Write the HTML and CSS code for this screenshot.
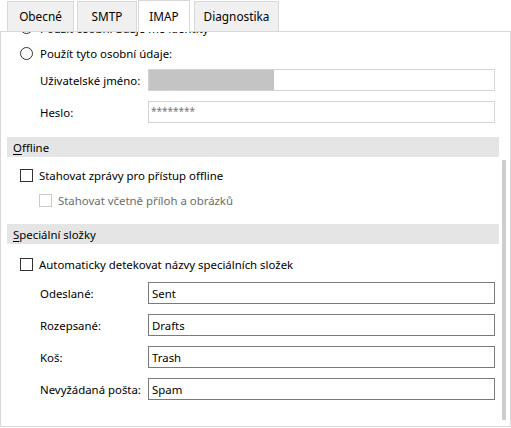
FILE: index.html
```html
<!DOCTYPE html>
<html lang="cs">
<head>
  <meta charset="UTF-8" />
  <title>Nastavení účtu - IMAP</title>
  <link rel="stylesheet" href="styles.css">
</head>
<body>
  <div class="tabs">
    <div class="tab tab-obecne">Obecné</div>
    <div class="tab tab-smtp">SMTP</div>
    <div class="tab tab-imap active">IMAP</div>
    <div class="tab tab-diag">Diagnostika</div>
  </div>

  <div class="panel">
    <div class="content">
      <label class="option first">
        <span class="radio"></span>
        <span class="option-text">Použít osobní údaje mé identity</span>
      </label>
      <label class="option">
        <span class="radio"></span>
        <span class="option-text">Použít tyto osobní údaje:</span>
      </label>

      <div class="fields">
        <div class="field">
          <span class="field-label">Uživatelské jméno:</span>
          <div class="input disabled"><span class="redacted"></span></div>
        </div>
        <div class="field">
          <span class="field-label">Heslo:</span>
          <div class="input disabled password">********</div>
        </div>
      </div>

      <div class="section"><u>O</u>ffline</div>
      <label class="check-row">
        <span class="checkbox"></span>
        <span>Stahovat zprávy pro přístup offline</span>
      </label>
      <label class="check-row sub disabled">
        <span class="checkbox"></span>
        <span>Stahovat včetně příloh a obrázků</span>
      </label>

      <div class="section section-special"><u>S</u>peciální složky</div>
      <label class="check-row auto">
        <span class="checkbox"></span>
        <span>Automaticky detekovat názvy speciálních složek</span>
      </label>

      <div class="fields folders">
        <div class="field">
          <span class="field-label">Odeslané:</span>
          <div class="input">Sent</div>
        </div>
        <div class="field">
          <span class="field-label">Rozepsané:</span>
          <div class="input">Drafts</div>
        </div>
        <div class="field">
          <span class="field-label">Koš:</span>
          <div class="input">Trash</div>
        </div>
        <div class="field">
          <span class="field-label">Nevyžádaná pošta:</span>
          <div class="input">Spam</div>
        </div>
      </div>
    </div>
    <div class="scroll-thumb"></div>
  </div>
</body>
</html>
```

FILE: styles.css
```css
body {
  margin: 0;
  width: 511px;
  height: 428px;
  background: #fff;
  color: #000;
  font-family: 'Noto Sans', 'Segoe UI', sans-serif;
  font-size: 11.4px;
  overflow: hidden;
}

.tabs {
  display: flex;
  align-items: flex-end;
  height: 31px;
  padding-left: 7px;
}

.tab {
  height: 30px;
  box-sizing: border-box;
  border: 1px solid #d9d9d9;
  border-bottom: none;
  background: #f0f0f0;
  display: flex;
  align-items: center;
  justify-content: center;
  padding-bottom: 2px;
  font-size: 11.8px;
}

.tab-obecne { width: 67px; }
.tab-smtp { width: 60px; margin-left: 3px; }
.tab-imap { width: 52px; margin-left: 1px; }
.tab-diag { width: 85px; margin-left: 4px; }

.tab.active {
  height: 32px;
  margin-bottom: -1px;
  background: #fff;
  position: relative;
  z-index: 1;
}

.panel {
  position: relative;
  width: 511px;
  height: 396px;
  box-sizing: border-box;
  border: 1px solid #d9d9d9;
  overflow: hidden;
}

.content {
  margin-top: -18px;
}

.option {
  display: flex;
  align-items: center;
  height: 26px;
  padding-left: 19px;
  gap: 7px;
}

.option.first .option-text {
  margin-top: 3px;
}

.radio {
  width: 13px;
  height: 13px;
  box-sizing: border-box;
  border: 1px solid #333;
  border-radius: 50%;
}

.fields {
  display: flex;
  flex-direction: column;
  gap: 10px;
  margin-top: 3px;
}

.field {
  display: flex;
  align-items: center;
  height: 22px;
  padding-left: 39px;
}

.field-label {
  width: 108px;
}

.input {
  width: 347px;
  height: 22px;
  box-sizing: border-box;
  border: 1px solid #7a7a7a;
  padding-left: 3px;
  display: flex;
  align-items: center;
}

.input.disabled {
  border-color: #d4d4d4;
  padding-left: 0;
}

.redacted {
  width: 125px;
  height: 20px;
  background: #c4c4c4;
}

.password {
  color: #777;
  font-size: 10px;
  padding-left: 2px !important;
  align-items: flex-start;
  padding-top: 2px;
}

.section {
  margin: 14px 11px 0 6px;
  height: 20px;
  background: #e5e5e5;
  padding-left: 6px;
  display: flex;
  align-items: center;
}

.section u {
  text-underline-offset: 2px;
}

.section-special {
  margin-top: 12px;
}

.check-row {
  display: flex;
  align-items: center;
  height: 24px;
  padding-left: 19px;
  gap: 6px;
  margin-top: 6px;
}

.check-row.sub {
  padding-left: 38px;
  margin-top: 1px;
}

.check-row.auto {
  margin-top: 8px;
}

.checkbox {
  width: 13px;
  height: 13px;
  box-sizing: border-box;
  border: 1px solid #333;
}

.check-row.disabled {
  color: #6d6d6d;
}

.check-row.disabled .checkbox {
  border-color: #ccc;
}

.folders {
  margin-top: 6px;
}

.scroll-thumb {
  position: absolute;
  top: 128px;
  right: 4px;
  width: 4px;
  height: 260px;
  background: #cdcdcd;
  border-radius: 1px;
}
```
